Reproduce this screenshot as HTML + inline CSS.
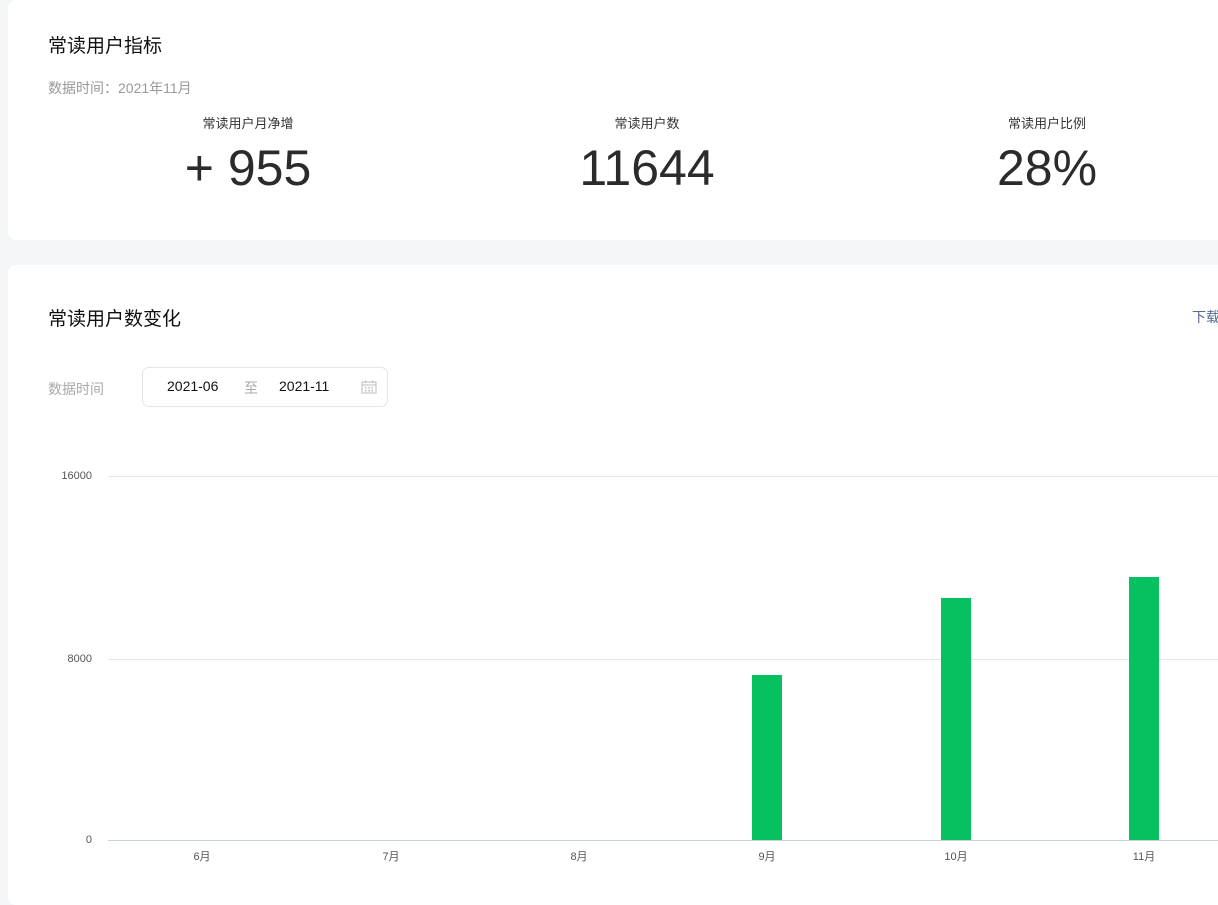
<!DOCTYPE html>
<html><head><meta charset="utf-8"><style>
*{margin:0;padding:0;box-sizing:border-box}
body{width:1218px;height:878px;background:#f5f6f8;font-family:"Liberation Sans","Noto Sans CJK SC",sans-serif;position:relative;overflow:hidden;color:#222}
.card{position:absolute;left:8px;width:1230px;background:#fff;border-radius:8px}
.abs{position:absolute;white-space:nowrap}
.stat{position:absolute;top:116px;width:300px;text-align:center}
.stat .l{font-size:13px;color:#333;line-height:16px}
.stat .v{font-size:50px;color:#2b2b2b;line-height:56px;margin-top:8px;font-family:"Liberation Sans",sans-serif;font-weight:normal}
.grid{position:absolute;left:108px;width:1110px;height:1px;background:#e5e6ea}
.yl{position:absolute;right:1126px;font-size:11px;color:#555;width:60px;text-align:right}
.bar{position:absolute;width:30px;background:#07c160;bottom:38px}
.xl{position:absolute;top:848px;font-size:11px;color:#555;width:40px;text-align:center}
</style></head><body>
<div class="card" style="top:0;height:240px"></div>
<div class="card" style="top:265px;height:640px"></div>
<div class="abs" style="left:48px;top:31px;font-size:19px;color:#111">常读用户指标</div>
<div class="abs" style="left:48px;top:78px;font-size:14px;color:#999">数据时间：2021年11月</div>
<div class="stat" style="left:98px"><div class="l">常读用户月净增</div><div class="v">+ 955</div></div>
<div class="stat" style="left:497px"><div class="l">常读用户数</div><div class="v">11644</div></div>
<div class="stat" style="left:897px"><div class="l">常读用户比例</div><div class="v">28%</div></div>

<div class="abs" style="left:48px;top:304px;font-size:19px;color:#111">常读用户数变化</div>
<div class="abs" style="left:1192px;top:307px;font-size:14px;color:#576b95">下载</div>
<div class="abs" style="left:48px;top:379px;font-size:14px;color:#aaa">数据时间</div>
<div class="abs" style="left:142px;top:367px;width:246px;height:40px;border:1px solid #e4e5e8;border-radius:7px"></div>
<div class="abs" style="left:167px;top:378px;font-size:14px;color:#111">2021-06</div>
<div class="abs" style="left:244px;top:378px;font-size:14px;color:#aaa">至</div>
<div class="abs" style="left:279px;top:378px;font-size:14px;color:#111">2021-11</div>
<svg class="abs" style="left:361px;top:380px" width="16" height="14" viewBox="0 0 16 14"><rect x="1" y="2" width="14" height="11" fill="none" stroke="#bbb" stroke-width="1"/><line x1="1" y1="5" x2="15" y2="5" stroke="#bbb"/><line x1="4.5" y1="0.5" x2="4.5" y2="3" stroke="#bbb"/><line x1="11.5" y1="0.5" x2="11.5" y2="3" stroke="#bbb"/><g fill="#bbb"><rect x="4" y="7" width="1.5" height="1.5"/><rect x="7.3" y="7" width="1.5" height="1.5"/><rect x="10.5" y="7" width="1.5" height="1.5"/><rect x="4" y="10" width="1.5" height="1.5"/><rect x="7.3" y="10" width="1.5" height="1.5"/><rect x="10.5" y="10" width="1.5" height="1.5"/></g></svg>

<div class="grid" style="top:476px"></div>
<div class="grid" style="top:659px"></div>
<div class="grid" style="top:840px;background:#c9d3e3"></div>
<div class="yl" style="top:470px">16000</div>
<div class="yl" style="top:653px">8000</div>
<div class="yl" style="top:834px">0</div>
<div class="bar" style="left:752px;height:165px"></div>
<div class="bar" style="left:941px;height:242px"></div>
<div class="bar" style="left:1129px;height:263px"></div>
<div class="xl" style="left:182px">6月</div>
<div class="xl" style="left:371px">7月</div>
<div class="xl" style="left:559px">8月</div>
<div class="xl" style="left:747px">9月</div>
<div class="xl" style="left:936px">10月</div>
<div class="xl" style="left:1124px">11月</div>
</body></html>
